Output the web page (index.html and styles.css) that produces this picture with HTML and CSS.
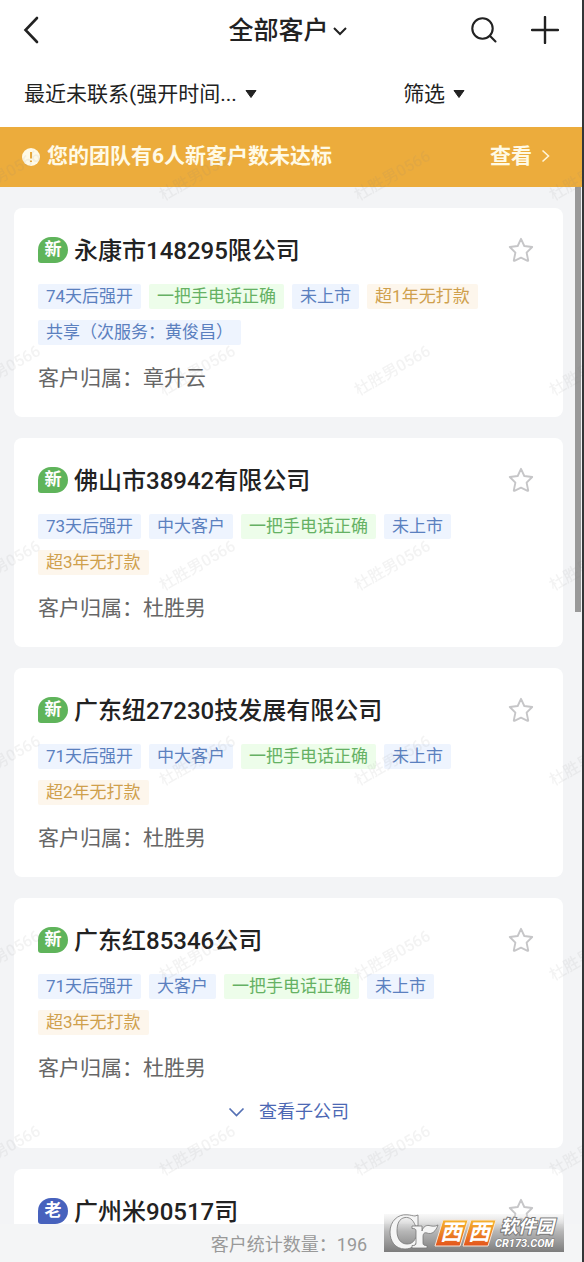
FILE: index.html
```html
<!DOCTYPE html>
<html lang="zh-CN">
<head>
<meta charset="utf-8">
<meta name="viewport" content="width=device-width, initial-scale=1">
<title>全部客户</title>
<link rel="stylesheet" href="styles.css">
</head>
<body>
<svg class="defs" aria-hidden="true">
  <symbol id="star" viewBox="0 0 26 26"><path d="M13 1.8 L16.3 9 L24.2 10 L18.6 15.6 L20.2 23.4 Q20.2 24 19.6 23.8 L13 20.6 L6.4 23.8 Q5.8 24 5.8 23.4 L7.4 15.6 L1.8 10 L9.7 9 Z" fill="none" stroke="#c6c6c8" stroke-width="1.9" stroke-linejoin="round"/></symbol>
</svg>
<div class="app">
  <header class="topbar">
    <button class="icon-btn" aria-label="返回"><svg width="16" height="28" viewBox="0 0 16 28"><path d="M14 2 L2.5 14 L14 26" fill="none" stroke="#222" stroke-width="2.6" stroke-linecap="round"/></svg></button>
    <button class="title">全部客户<svg width="16" height="10" viewBox="0 0 16 10"><path d="M2 2 L8 8 L14 2" fill="none" stroke="#222" stroke-width="2"/></svg></button>
    <div class="actions">
      <button class="icon-btn" aria-label="搜索"><svg width="28" height="28" viewBox="0 0 28 28"><g fill="none" stroke="#222" stroke-width="2.1" stroke-linecap="round"><circle cx="12.5" cy="12.5" r="10.2"/><path d="M19.8 19.8 L25.5 25.5"/></g></svg></button>
      <button class="icon-btn" aria-label="添加"><svg width="28" height="28" viewBox="0 0 28 28"><path d="M14 1 V27 M1 14 H27" fill="none" stroke="#222" stroke-width="2.4" stroke-linecap="round"/></svg></button>
    </div>
  </header>
  <nav class="filters">
    <button class="filter filter-sort" aria-haspopup="listbox">最近未联系(强开时间...<svg width="12" height="8" viewBox="0 0 12 8"><path d="M1 0.5 H11 L6 7.5 Z" fill="#222" stroke="#222" stroke-linejoin="round"/></svg></button>
    <button class="filter" aria-haspopup="dialog">筛选<svg width="12" height="8" viewBox="0 0 12 8"><path d="M1 0.5 H11 L6 7.5 Z" fill="#222" stroke="#222" stroke-linejoin="round"/></svg></button>
  </nav>
  <div class="content">
    <div class="banner">
      <svg width="18" height="18" viewBox="0 0 18 18"><circle cx="9" cy="9" r="9" fill="#fffae6"/><path d="M9 4 V10.5 M9 12.5 V14" stroke="#ecac3c" stroke-width="2"/></svg>
      <span class="banner-text">您的团队有6人新客户数未达标</span>
      <a class="banner-link" href="#">查看<svg width="9" height="14" viewBox="0 0 9 14"><path d="M1.5 1.5 L7.5 7 L1.5 12.5" fill="none" stroke="#fff5d8" stroke-width="1.6"/></svg></a>
    </div>
    <div class="scroller">
      <main class="list">
        <article class="card">
          <div class="card-head"><span class="badge">新</span><h2 class="name">永康市148295限公司</h2><button class="star" aria-label="收藏"><svg width="26" height="26"><use href="#star"/></svg></button></div>
          <div class="tags"><span class="tag">74天后强开</span><span class="tag green">一把手电话正确</span><span class="tag">未上市</span><span class="tag gold">超1年无打款</span><span class="tag">共享（次服务：黄俊昌）</span></div>
          <p class="owner">客户归属：章升云</p>
        </article>
        <article class="card">
          <div class="card-head"><span class="badge">新</span><h2 class="name">佛山市38942有限公司</h2><button class="star" aria-label="收藏"><svg width="26" height="26"><use href="#star"/></svg></button></div>
          <div class="tags"><span class="tag">73天后强开</span><span class="tag">中大客户</span><span class="tag green">一把手电话正确</span><span class="tag">未上市</span><span class="tag gold">超3年无打款</span></div>
          <p class="owner">客户归属：杜胜男</p>
        </article>
        <article class="card">
          <div class="card-head"><span class="badge">新</span><h2 class="name">广东纽27230技发展有限公司</h2><button class="star" aria-label="收藏"><svg width="26" height="26"><use href="#star"/></svg></button></div>
          <div class="tags"><span class="tag">71天后强开</span><span class="tag">中大客户</span><span class="tag green">一把手电话正确</span><span class="tag">未上市</span><span class="tag gold">超2年无打款</span></div>
          <p class="owner">客户归属：杜胜男</p>
        </article>
        <article class="card">
          <div class="card-head"><span class="badge">新</span><h2 class="name">广东红85346公司</h2><button class="star" aria-label="收藏"><svg width="26" height="26"><use href="#star"/></svg></button></div>
          <div class="tags"><span class="tag">71天后强开</span><span class="tag">大客户</span><span class="tag green">一把手电话正确</span><span class="tag">未上市</span><span class="tag gold">超3年无打款</span></div>
          <p class="owner">客户归属：杜胜男</p>
          <button class="expand"><svg width="17" height="10" viewBox="0 0 17 10"><path d="M1.5 1.5 L8.5 8.5 L15.5 1.5" fill="none" stroke="#5470b4" stroke-width="1.7"/></svg>查看子公司</button>
        </article>
        <article class="card">
          <div class="card-head"><span class="badge old">老</span><h2 class="name">广州米90517司</h2><button class="star" aria-label="收藏"><svg width="26" height="26"><use href="#star"/></svg></button></div>
        </article>
      </main>
      <div class="thumb"></div>
    </div>
    <svg class="watermark" aria-hidden="true">
      <defs><pattern id="wm" x="100" y="146" width="195" height="195" patternUnits="userSpaceOnUse"><text class="wm-text" x="97" y="103" text-anchor="middle" transform="rotate(-30 97 97)">杜胜男0566</text></pattern></defs>
      <rect width="100%" height="100%" fill="url(#wm)"/>
    </svg>
  </div>
  <footer class="summary">客户统计数量：196</footer>
  <svg class="site-logo" width="180" height="38" viewBox="0 0 180 38" role="img" aria-label="西西软件园 CR173.COM">
    <defs>
      <linearGradient id="plate" x1="0" y1="0" x2="0" y2="1"><stop offset="0" stop-color="#ddd" stop-opacity=".2"/><stop offset=".45" stop-color="#b0b0b0" stop-opacity=".9"/><stop offset="1" stop-color="#7c7c7c"/></linearGradient>
      <linearGradient id="fire" x1="0" y1="0" x2="0" y2="1"><stop offset="0" stop-color="#f6b52e"/><stop offset="1" stop-color="#e3531c"/></linearGradient>
    </defs>
    <rect width="180" height="38" fill="url(#plate)"/>
    <g stroke="#777" stroke-width=".8" fill="#f5f5f5" stroke-linejoin="round">
      <path d="M31 2 L34 1 V12 L31.500 12 C29 5 25 3 21 3.500 C15 4.500 13 10 13 17 C13 25 17 30 23 30 C27 30 30 28 31.500 24 H34 C33 31 28 35 21 35 C11 35 6 27 6 18 C6 7 14 0 23 0.800 C27 1 29 2 31 2 Z"/>
      <path d="M28 12 H38 V17 C39 13 42 11 45 11.500 C47 12 51 13 54 11 C52 17 48 21 43 19 C40 18 39 20 39 23 V29 C39 31 40 31.500 43 31.500 V34 H28 V31.500 C31 31.500 32 31 32 29 V17 C32 15 31 14.500 28 14.500 Z"/>
    </g>
    <path d="M59 6 H84 L76 32 H51 Z M87 6 H112 L104 32 H79 Z" fill="url(#fire)" stroke="#f6e6d8" stroke-width="1"/>
    <text class="logo-xi" x="56" y="26">西</text>
    <text class="logo-xi" x="84" y="26">西</text>
    <text class="logo-cn" x="116" y="19">软件园</text>
    <text class="logo-en" x="111" y="33">CR173.COM</text>
  </svg>
</div>
</body>
</html>
```
FILE: styles.css
```css
* { box-sizing: border-box; }
body {
  margin: 0;
  font-family: Roboto, "Noto Sans CJK SC", sans-serif;
  color: #222;
  background: #fff;
}
button {
  border: 0;
  padding: 0;
  background: none;
  font: inherit;
  color: inherit;
  display: flex;
  align-items: center;
  cursor: pointer;
}
svg { display: block; flex: none; }
.defs { position: absolute; width: 0; height: 0; }
.app {
  position: relative;
  display: flex;
  flex-direction: column;
  height: 100vh;
  border-right: 2px solid #343638;
  overflow: hidden;
}
.topbar {
  display: grid;
  grid-template-columns: 1fr auto 1fr;
  align-items: center;
  height: 60px;
  padding: 0 23px;
  flex: none;
}
.title {
  gap: 3px;
  padding: 2px 6px 0 0;
  font-size: 25px;
  font-weight: 500;
  line-height: 36px;
}
.actions { display: flex; justify-content: flex-end; gap: 33px; }
.filters {
  display: flex;
  align-items: center;
  height: 67px;
  padding: 0 24px;
  flex: none;
}
.filter { gap: 8px; font-size: 21px; line-height: 32px; }
.filter-sort { flex: 0 0 71%; }
.content {
  position: relative;
  flex: 1;
  min-height: 0;
  display: flex;
  flex-direction: column;
  background: #f3f4f6;
}
.banner {
  display: flex;
  align-items: center;
  gap: 7px;
  height: 60px;
  padding: 0 32px 0 22px;
  flex: none;
  background: #ecac3c;
  color: #fffae6;
  font-size: 21px;
  font-weight: 700;
  line-height: 32px;
}
.banner-text { flex: 1; padding-bottom: 2px; }
.banner-link {
  display: flex;
  align-items: center;
  gap: 9px;
  padding-bottom: 2px;
  color: inherit;
  text-decoration: none;
}
.scroller { position: relative; flex: 1; min-height: 0; overflow: hidden; }
.list {
  display: flex;
  flex-direction: column;
  gap: 21px;
  padding: 21px 19px 21px 14px;
}
.thumb {
  position: absolute;
  top: 0;
  right: 1px;
  width: 6px;
  height: 41%;
  background: #999;
}
.card { padding: 24px; border-radius: 8px; background: #fff; }
.card-head { display: flex; align-items: center; gap: 6px; height: 36px; }
.badge {
  display: flex;
  align-items: center;
  justify-content: center;
  width: 30px;
  height: 26px;
  border-radius: 13px 13px 13px 3px;
  background: #5fb45b;
  color: #fff;
  font-size: 17px;
  font-weight: 700;
  line-height: 24px;
  padding-bottom: 2px;
}
.badge.old { background: #4762bd; }
.name { flex: 1; margin: 0; padding-top: 2px; font-size: 24px; font-weight: 500; line-height: 36px; }
.star { padding: 0 5px; }
.tags { display: flex; flex-wrap: wrap; gap: 11px 8px; margin-top: 16px; }
.tag {
  padding: 0 8px;
  border-radius: 2px;
  background: #eef4fe;
  color: #5b80bf;
  font-size: 17px;
  line-height: 25px;
}
.tag.green { background: #edfdea; color: #65b163; }
.tag.gold { background: #fdf6ec; color: #cfa04c; }
.owner { margin: 18px 0 0; color: #666; font-size: 21px; line-height: 30px; }
.expand {
  gap: 14px;
  margin: 14px auto -3px;
  color: #4c68b4;
  font-size: 18px;
  line-height: 30px;
}
.watermark {
  position: absolute;
  inset: 0;
  width: 100%;
  height: 100%;
  pointer-events: none;
}
.wm-text { font-size: 16px; font-weight: 500; fill: #787878; fill-opacity: .09; }
.summary {
  flex: none;
  height: 38px;
  padding-right: 4px;
  background: #f4f5f6;
  color: #999;
  font-size: 18px;
  line-height: 42px;
  text-align: center;
}
.site-logo { position: absolute; right: 18px; bottom: 10px; }
.logo-xi { font-size: 22px; font-weight: 700; font-style: italic; fill: #fff; }
.logo-cn {
  font-size: 18px;
  font-weight: 700;
  font-style: italic;
  fill: #fff;
  stroke: #777;
  stroke-width: 2px;
  paint-order: stroke;
}
.logo-en {
  font-size: 11px;
  font-weight: 700;
  font-style: italic;
  fill: #fff;
  stroke: #777;
  stroke-width: 1px;
  paint-order: stroke;
}
```
